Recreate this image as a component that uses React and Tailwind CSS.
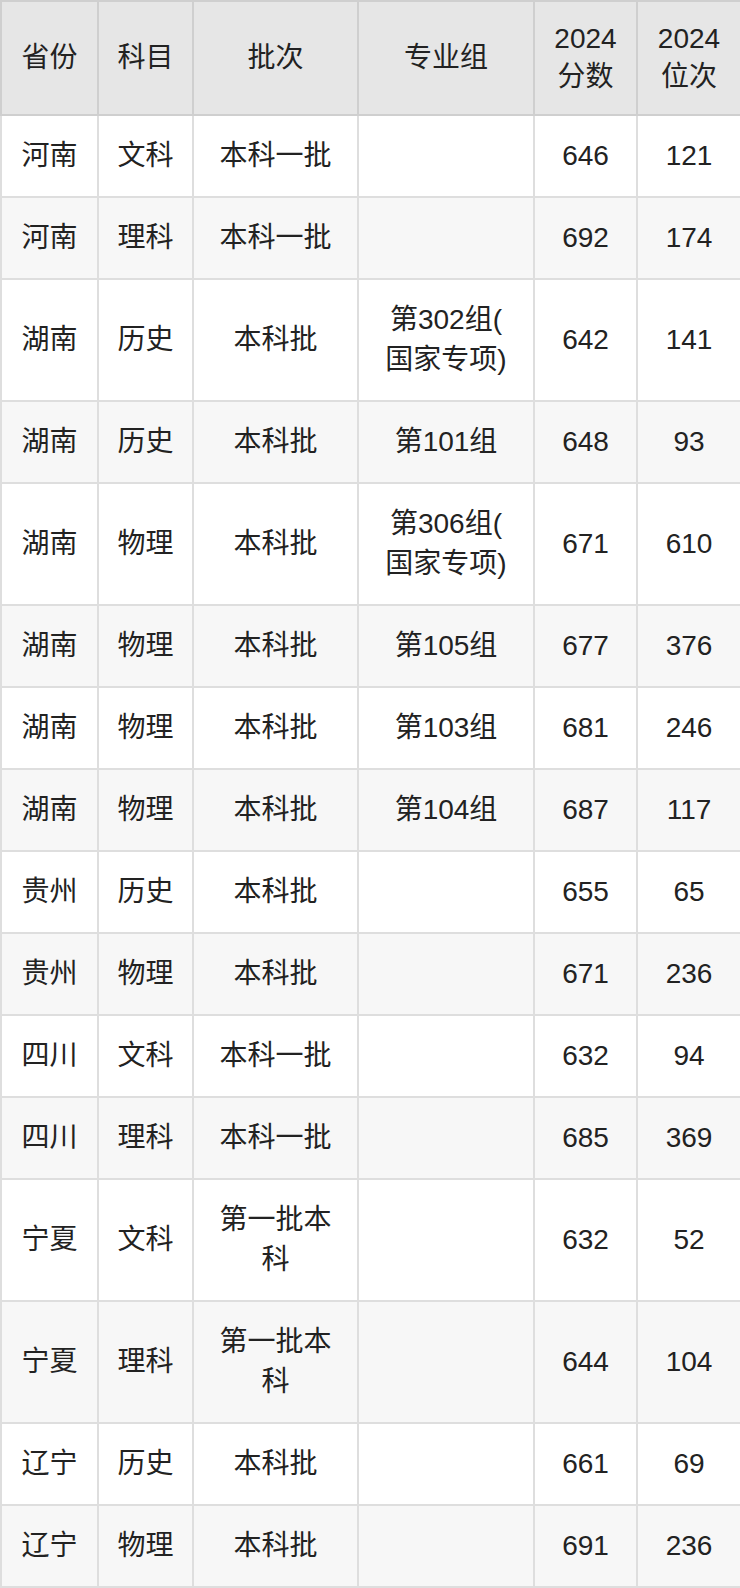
import React from "react";

const rows = [
  ["河南", "文科", "本科一批", "", "646", "121"],
  ["河南", "理科", "本科一批", "", "692", "174"],
  ["湖南", "历史", "本科批", ["第302组(", "国家专项)"], "642", "141"],
  ["湖南", "历史", "本科批", "第101组", "648", "93"],
  ["湖南", "物理", "本科批", ["第306组(", "国家专项)"], "671", "610"],
  ["湖南", "物理", "本科批", "第105组", "677", "376"],
  ["湖南", "物理", "本科批", "第103组", "681", "246"],
  ["湖南", "物理", "本科批", "第104组", "687", "117"],
  ["贵州", "历史", "本科批", "", "655", "65"],
  ["贵州", "物理", "本科批", "", "671", "236"],
  ["四川", "文科", "本科一批", "", "632", "94"],
  ["四川", "理科", "本科一批", "", "685", "369"],
  ["宁夏", "文科", ["第一批本", "科"], "", "632", "52"],
  ["宁夏", "理科", ["第一批本", "科"], "", "644", "104"],
  ["辽宁", "历史", "本科批", "", "661", "69"],
  ["辽宁", "物理", "本科批", "", "691", "236"],
];

function Cell({ v }) {
  if (Array.isArray(v)) {
    return (
      <>
        {v[0]}
        <br />
        {v[1]}
      </>
    );
  }
  return v;
}

export default function App() {
  return (
    <div
      className="w-[740px] bg-white text-[#222222]"
      style={{ fontFamily: '"Liberation Sans", "Noto Sans CJK SC", sans-serif' }}
    >
      <table className="w-[740px] table-fixed border-collapse text-[28px] leading-[40px]">
        <colgroup>
          <col className="w-[97px]" />
          <col className="w-[95px]" />
          <col className="w-[165px]" />
          <col className="w-[176px]" />
          <col className="w-[103px]" />
          <col className="w-[104px]" />
        </colgroup>
        <thead>
          <tr className="bg-[#e6e6e6]">
            {["省份", "科目", "批次", "专业组"].map((h) => (
              <th
                key={h}
                className="border-2 border-[#cfcfcf] px-3 py-[18px] text-center font-normal leading-[38px]"
              >
                {h}
              </th>
            ))}
            <th className="border-2 border-[#cfcfcf] px-2 py-[18px] text-center font-normal leading-[38px]">
              2024
              <br />
              分数
            </th>
            <th className="border-2 border-[#cfcfcf] px-2 py-[18px] text-center font-normal leading-[38px]">
              2024
              <br />
              位次
            </th>
          </tr>
        </thead>
        <tbody>
          {rows.map((r, i) => (
            <tr key={i} className={i % 2 === 1 ? "bg-[#f7f7f7]" : "bg-white"}>
              {r.map((v, j) => (
                <td
                  key={j}
                  className="border-2 border-[#dedede] px-2 py-5 text-center align-middle"
                >
                  <Cell v={v} />
                </td>
              ))}
            </tr>
          ))}
        </tbody>
      </table>
    </div>
  );
}
